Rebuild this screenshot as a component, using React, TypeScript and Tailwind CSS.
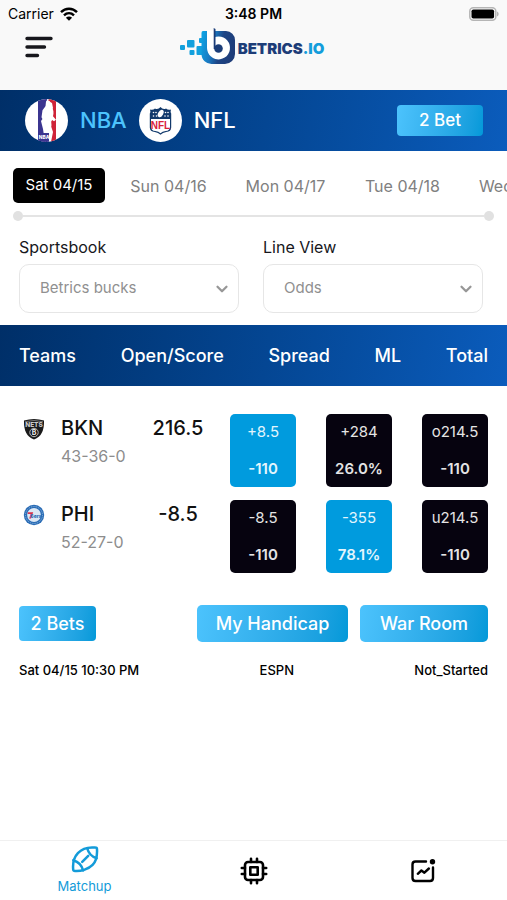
import {ChevronDown} from "lucide-react";
import clsx from "clsx";

const dates = ["Sun 04/16", "Mon 04/17", "Tue 04/18", "Wed 04/19"];

const columns = ["Teams", "Open/Score", "Spread", "ML", "Total"];

const teams = [
    {
        name: "BKN",
        record: "43-36-0",
        score: "216.5",
        odds: [
            {line: "+8.5", price: "-110", active: true},
            {line: "+284", price: "26.0%", active: false},
            {line: "o214.5", price: "-110", active: false},
        ],
    },
    {
        name: "PHI",
        record: "52-27-0",
        score: "-8.5",
        odds: [
            {line: "-8.5", price: "-110", active: false},
            {line: "-355", price: "78.1%", active: true},
            {line: "u214.5", price: "-110", active: false},
        ],
    },
];

const StatusBar = () => (
    <div className="grid grid-cols-3 items-center h-7 px-2 text-sm text-black">
        <div className="flex items-center gap-1.5">
            <span>Carrier</span>
            <svg viewBox="0 0 18 14" className="w-[18px] h-[14px]" fill="none" stroke="currentColor" strokeWidth="2.4">
                <path d="M1 5.2C5.5.6 12.500.6 17 5.200" />
                <path d="M4 8.300c2.900-2.800 7.100-2.800 10 0" />
                <path d="M9 13.800 5.900 10.800c1.800-1.700 4.400-1.700 6.200 0z" fill="currentColor" stroke="none" />
            </svg>
        </div>
        <span className="text-center font-semibold whitespace-nowrap">3:48 PM</span>
        <svg viewBox="0 0 30 14" className="w-[30px] h-[14px] justify-self-end">
            <rect x=".8" y=".8" width="26" height="12.400" rx="3.500" fill="#fff" stroke="#b5b5b5" strokeWidth="1.500" />
            <rect x="2.500" y="2.500" width="22.600" height="9" rx="1.800" fill="#000" />
            <path d="M28 4.500c2.200.8 2.200 4.200 0 5z" fill="#b5b5b5" />
        </svg>
    </div>
);

const LogoMark = () => (
    <svg viewBox="178 28 57 37" className="w-[57px] h-[37px]">
        <defs>
            <linearGradient id="mark" x1="200" y1="40" x2="234" y2="48" gradientUnits="userSpaceOnUse">
                <stop offset="0" stopColor="#0da2e3" />
                <stop offset=".35" stopColor="#1a78c0" />
                <stop offset=".6" stopColor="#1d4586" />
                <stop offset="1" stopColor="#1f3c78" />
            </linearGradient>
        </defs>
        <g fill="#12a0dd">
            <rect x="179" y="45" width="5" height="5" rx="1" />
            <rect x="186" y="40" width="7.500" height="7.500" rx="1" />
            <rect x="188.500" y="50" width="5" height="5" rx="1" />
            <rect x="198" y="38" width="4" height="5" rx="1" />
            <rect x="195.500" y="46" width="7" height="9" rx="1" />
        </g>
        <path d="M202 31h23a9 9 0 0 1 9 9v14a10 10 0 0 1-10 10h-13a10 10 0 0 1-10.500-10V33q0-2 1.500-2z" fill="url(#mark)" />
        <path d="M206 30.500h7v6.800A11.500 11.500 0 1 1 206 48z" fill="#fff" />
        <circle cx="217.500" cy="48.500" r="4.300" fill="#1b3d78" />
        <path d="M212.700 28l1.800 1v20h-1.800z" fill="#1b3d78" />
    </svg>
);

const Header = () => (
    <header className="bg-[#f9f9f9] pb-[25px]">
        <StatusBar />
        <div className="grid grid-cols-[1fr_auto_1fr] items-center px-6">
            <button aria-label="Menu" className="w-8">
                <svg viewBox="0 0 29 22" className="w-[29px] h-[22px]" stroke="#17171c" strokeWidth="3.400" strokeLinecap="round">
                    <path d="M3 2.500h24M3 11h17.500M3 19.500h10.500" />
                </svg>
            </button>
            <a href="#" className="flex items-center gap-0.5">
                <LogoMark />
                <span className="text-[15px] leading-5 font-black text-[#1d3d78] pt-1 pr-1">
                    BETRICS<span className="text-[#139ddb]">.IO</span>
                </span>
            </a>
        </div>
    </header>
);

const NbaLogo = () => (
    <svg viewBox="0 0 43 43" className="w-[43px] h-[43px]">
        <clipPath id="round">
            <circle cx="21.500" cy="21.500" r="21.500" />
        </clipPath>
        <g clipPath="url(#round)">
            <rect width="43" height="43" fill="#fff" />
            <path d="M13 0h9l-1 7-3 6 1 5-3 4 2 8 2 13h-7z" fill="#3b3590" />
            <path d="M24 0h7v43h-5l2-10-3-9 3-4-3-6 3-5-1-5-4-2z" fill="#cf2338" />
            <path d="M21 2.500c2-2 5-.5 4.600 2.300l1 3.400c2 2 2.400 5.600 1.400 9l3 3.600-2 1.500-3-2 .500 6-1.500 6 1 9-3.500 1-3-9 1-8-4-7 1-7 3-4z" fill="#fff" />
            <path d="M13 34h11v9H13z" fill="#3b3590" />
            <text x="13.800" y="40" fontSize="4.800" fontWeight="800" fill="#fff">NBA</text>
        </g>
    </svg>
);

const NflLogo = () => (
    <svg viewBox="0 0 43 43" className="w-[43px] h-[43px]">
        <circle cx="21.500" cy="21.500" r="21.500" fill="#fff" />
        <path d="M11 10.500q3 .8 5-1 3 1.500 5.500-1.500 2.500 3 5.500 1.500 2 1.800 5 1-.8 2 .2 4v14q0 4-5 4.500-3.500.4-5.700 2.800-2.200-2.400-5.700-2.800-5-.500-5-4.500v-14q1-2 .2-4z" fill="#123a6c" />
        <path d="M12 20h19v8q0 3.600-4.400 4.100-3.300.4-5.100 2.100-1.800-1.700-5.100-2.100-4.400-.500-4.400-4.100z" fill="#fff" />
        <g fill="#fff">
            <ellipse cx="21.700" cy="14.500" rx="2.500" ry="4" transform="rotate(30 21.700 14.500)" />
            <circle cx="14.500" cy="13.500" r=".8" />
            <circle cx="17" cy="13.500" r=".8" />
            <circle cx="14.500" cy="17" r=".8" />
            <circle cx="17.500" cy="17" r=".8" />
            <circle cx="26.500" cy="13.500" r=".8" />
            <circle cx="29" cy="13.500" r=".8" />
            <circle cx="26" cy="17" r=".8" />
            <circle cx="29" cy="17" r=".8" />
        </g>
        <text x="21.500" y="29.500" fontSize="10" fontWeight="800" textAnchor="middle" fill="#d9223a" className="font-['Liberation_Sans',sans-serif]">NFL</text>
    </svg>
);

const NetsLogo = () => (
    <svg viewBox="0 0 22 22" className="w-[22px] h-[22px]">
        <path d="M1 2.500Q11-.5 21 2.500c.3 9-2 16-10 19C3 18.500.7 11.500 1 2.500z" fill="#1a1a1a" />
        <path d="M2 3.800Q11 1 20 3.800" fill="none" stroke="#aaa" strokeWidth=".6" />
        <text x="11" y="9.300" fontSize="6.500" fontWeight="800" textAnchor="middle" fill="#c9c9c9">NETS</text>
        <circle cx="11" cy="14.500" r="4.200" fill="#111" stroke="#bbb" strokeWidth="1" />
        <text x="11" y="17.200" fontSize="7" fontWeight="800" textAnchor="middle" fill="#ddd">B</text>
    </svg>
);

const SixersLogo = () => (
    <svg viewBox="0 0 22 22" className="w-[22px] h-[22px]">
        <circle cx="11" cy="11" r="10.200" fill="#2a6cb5" />
        <circle cx="11" cy="11" r="8.500" fill="none" stroke="#8db6df" strokeWidth=".9" strokeDasharray="1.300 1" />
        <circle cx="11" cy="11" r="6.900" fill="#dce8f5" />
        <path d="M4.800 8.300h5.400L8 14.500H6.200L7.600 10H4.800z" fill="#d8324a" />
        <text x="13" y="13.500" fontSize="5" fontWeight="800" textAnchor="middle" fill="#2a6cb5">6ers</text>
    </svg>
);

const LeagueBar = () => (
    <nav className="flex items-center justify-between h-[61px] pl-[25px] pr-6 bg-linear-100 from-[#002f68] to-[#0b5cbc] text-[22px] font-medium">
        <div className="flex items-center gap-3">
            <a href="#" className="flex items-center gap-3 text-[#4cc3fd]">
                <NbaLogo />
                NBA
            </a>
            <a href="#" className="flex items-center gap-3 text-white">
                <NflLogo />
                NFL
            </a>
        </div>
        <button className="w-[86px] h-[31px] rounded bg-linear-100 from-[#4cc3fd] to-[#0299d9] text-white text-[17px] font-medium">
            2 Bet
        </button>
    </nav>
);

const DatePicker = () => (
    <section>
        <div className="flex items-center overflow-hidden pt-[17px] pl-[13px] text-base text-[#808080]">
            <button className="w-[92px] h-[35px] mr-[5px] shrink-0 rounded-[5px] bg-black text-[15px] text-white">
                Sat 04/15
            </button>
            {dates.map((date) => (
                <button key={date} className="w-[117px] h-[35px] shrink-0 whitespace-nowrap">
                    {date}
                </button>
            ))}
        </div>
        <div className="flex items-center mt-2 px-[13px]">
            <span className="w-2.5 h-2.5 rounded-full bg-[#e1e1e1]" />
            <span className="flex-1 h-0.5 bg-[#e4e4e4]" />
            <span className="w-2.5 h-2.5 rounded-full bg-[#e1e1e1]" />
        </div>
    </section>
);

const SelectField = ({id, label, option}: { id: string; label: string; option: string }) => (
    <div>
        <label htmlFor={id} className="block text-base leading-6 text-[#17171c]">{label}</label>
        <div className="relative mt-[5px]">
            <select
                id={id}
                className="w-full h-[49px] pl-5 pr-10 appearance-none rounded-[10px] border border-[#e6e6e6] bg-white text-[15px] text-[#909090]"
            >
                <option>{option}</option>
            </select>
            <ChevronDown className="absolute right-2 top-4 w-[18px] h-[18px] text-[#979797] pointer-events-none" strokeWidth={3} />
        </div>
    </div>
);

const OddsTable = () => (
    <table className="block">
        <thead className="block bg-linear-100 from-[#002f68] to-[#0b5cbc] text-white">
            <tr className="flex items-center justify-between h-[61px] px-[19px]">
                {columns.map((column) => (
                    <th key={column} className="text-[18px] font-medium">{column}</th>
                ))}
            </tr>
        </thead>
        <tbody className="flex flex-col gap-[13px] pt-7 pl-[23px] pr-[19px]">
            {teams.map((team) => (
                <tr key={team.name} className="flex">
                    <td className="flex flex-1 gap-4">
                        <div className="pt-1">
                            {team.name === "BKN" ? <NetsLogo /> : <SixersLogo />}
                        </div>
                        <div>
                            <p className="text-xl leading-7 font-medium text-[#111]">{team.name}</p>
                            <p className="text-base leading-7 text-[#8d8d8d]">{team.record}</p>
                        </div>
                    </td>
                    <td className="w-[104px] text-center text-xl leading-7 font-medium text-[#111]">{team.score}</td>
                    <td className="w-[258px] flex justify-between">
                        {team.odds.map((odd) => (
                            <button
                                key={odd.line}
                                className={clsx(
                                    "w-[66px] h-[73px] rounded-[5px] flex flex-col items-center justify-between py-2 text-[15px] leading-5",
                                    odd.active ? "bg-[#009bde] text-[#e3f5fd]" : "bg-[#06030f] text-[#e4e4e4]",
                                )}
                            >
                                <span>{odd.line}</span>
                                <span className="font-semibold">{odd.price}</span>
                            </button>
                        ))}
                    </td>
                </tr>
            ))}
        </tbody>
    </table>
);

const Actions = () => (
    <section className="pt-8 px-[19px] text-white">
        <div className="flex items-center justify-between text-[18px] font-medium">
            <button className="w-[77px] h-[35px] rounded bg-linear-100 from-[#4cc3fd] to-[#0299d9]">2 Bets</button>
            <div className="flex gap-3">
                <button className="w-[151px] h-[37px] rounded-[5px] bg-linear-100 from-[#4cc3fd] to-[#0299d9]">My Handicap</button>
                <button className="w-[128px] h-[37px] rounded-[5px] bg-linear-100 from-[#4cc3fd] to-[#0299d9]">War Room</button>
            </div>
        </div>
        <div className="flex justify-between pt-[18px] text-[13px] leading-5 font-medium text-black">
            <span>Sat 04/15 10:30 PM</span>
            <span>ESPN</span>
            <span>Not_Started</span>
        </div>
    </section>
);

const TabBar = () => (
    <nav className="mt-auto grid grid-cols-3 h-[60px] border-t border-[#f0f0f0] text-black">
        <a href="#" className="flex flex-col items-center gap-[3px] pt-1 text-[#139bd9]">
            <svg viewBox="0 0 28 28" className="w-7 h-7" fill="none" stroke="currentColor" strokeWidth="2.500" strokeLinecap="round" strokeLinejoin="round">
                <path d="M24.500 2.600Q26 2.600 26 4.500c.3 6-.7 11.500-4.400 15.400S10 26.500 4 26Q2.300 26 2.200 24.500c-.6-6 .6-12 4.700-16.400S17.500 1.800 24.500 2.600z" />
                <path d="M16.200 3.200c1.200 4.600 4.500 8.500 9.500 10M2.300 15.200c5 1.500 8.600 5.200 9.800 10.300M11.200 16.800l6-6" />
            </svg>
            <span className="text-[13px] leading-5">Matchup</span>
        </a>
        <a href="#" aria-label="Models" className="flex items-center justify-center">
            <svg viewBox="0 0 28 28" className="w-7 h-7" fill="none" stroke="currentColor" strokeWidth="2.600" strokeLinecap="round" strokeLinejoin="round">
                <rect x="5" y="5" width="18" height="18" rx="3" />
                <rect x="10.300" y="10.300" width="7.400" height="7.400" />
                <path d="M11 5V1.800M17 5V1.800M11 23v3.200M17 23v3.200M5 11H1.800M5 17H1.800M23 11h3.200M23 17h3.200" />
            </svg>
        </a>
        <a href="#" aria-label="Trends" className="flex items-center justify-center">
            <svg viewBox="0 0 28 28" className="w-7 h-7" fill="none" stroke="currentColor" strokeWidth="2.400" strokeLinecap="round" strokeLinejoin="round">
                <path d="M17 4.500H6.500Q3.500 4.500 3.500 7.500v13.500Q3.500 24 6.500 24h14.500q3 0 3-3V10.500" />
                <path d="M8.800 16.800l3.600-3.300 3 2.200 4.500-4.200" />
                <circle cx="23.500" cy="4.800" r="2.700" fill="currentColor" stroke="none" />
            </svg>
        </a>
    </nav>
);

const App = () => {
    return (
        <div className="flex flex-col min-h-screen bg-white font-['Inter',sans-serif]">
            <Header />
            <LeagueBar />
            <DatePicker />
            <section className="grid grid-cols-2 gap-6 pt-[14px] pb-3 pl-[19px] pr-6">
                <SelectField id="sportsbook" label="Sportsbook" option="Betrics bucks" />
                <SelectField id="line-view" label="Line View" option="Odds" />
            </section>
            <OddsTable />
            <Actions />
            <TabBar />
        </div>
    )
}

export default App
